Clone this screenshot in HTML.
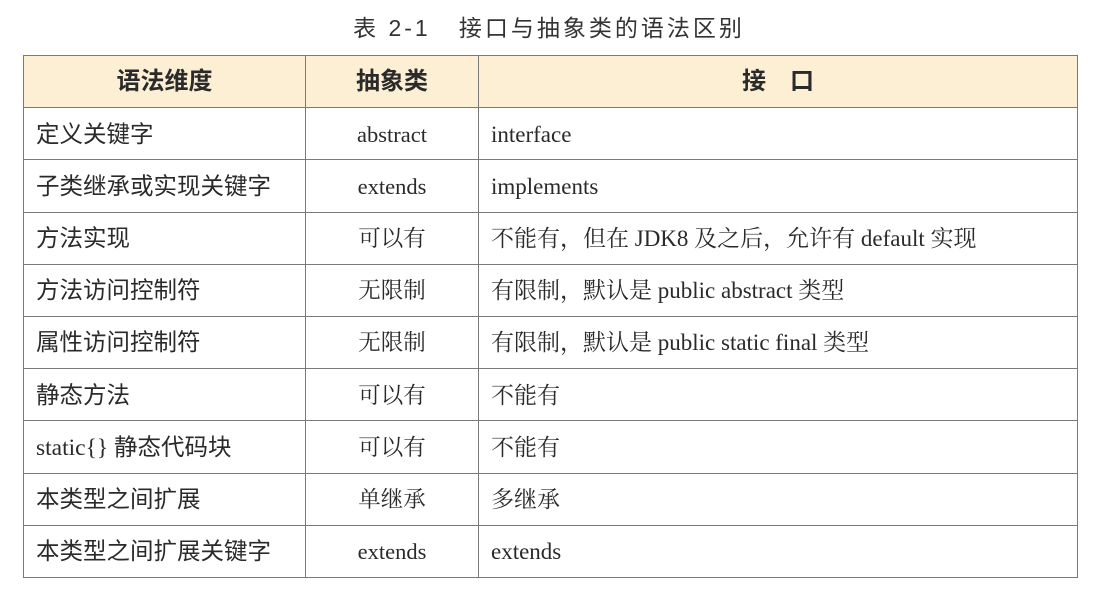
<!DOCTYPE html>
<html><head><meta charset="utf-8"><style>
body{margin:0;width:1098px;height:597px;background:#fff;position:relative;overflow:hidden;font-family:"Liberation Serif","Noto Serif CJK SC","Noto Sans CJK SC",serif;color:#2a2a2a}
.t{position:absolute;top:13px;left:0;width:1098px;text-align:center;font-size:23px;line-height:30px;font-family:"Liberation Sans","Noto Sans CJK SC",sans-serif;color:#333;letter-spacing:3px;white-space:pre}
table{position:absolute;left:23px;top:55px;border-collapse:collapse;width:1055px;table-layout:fixed}
td,th{border:1.5px solid #7a7a7a;height:52.2px;padding:0 12px;font-size:23px;line-height:26px;font-weight:normal;white-space:nowrap;vertical-align:middle;box-sizing:border-box}
td span{display:inline-block;vertical-align:middle;line-height:26px}
th{background:#fcefd4;font-family:"Liberation Sans","Noto Sans CJK SC",sans-serif;font-weight:bold;font-size:24px}
td:first-child{font-family:"Liberation Serif","Noto Sans CJK SC",sans-serif;font-size:23.5px}
td:nth-child(2){text-align:center;font-size:22.5px}
</style></head><body>
<div class="t">表 2-1   接口与抽象类的语法区别</div>
<table>
<colgroup><col style="width:282px"><col style="width:173px"><col></colgroup>
<tr><th>语法维度</th><th>抽象类</th><th>接　口</th></tr>
<tr><td><span>定义关键字</span></td><td><span>abstract</span></td><td><span>interface</span></td></tr>
<tr><td><span>子类继承或实现关键字</span></td><td><span>extends</span></td><td><span>implements</span></td></tr>
<tr><td><span>方法实现</span></td><td><span>可以有</span></td><td><span>不能有，但在 JDK8 及之后，允许有 default 实现</span></td></tr>
<tr><td><span>方法访问控制符</span></td><td><span>无限制</span></td><td><span>有限制，默认是 public abstract 类型</span></td></tr>
<tr><td><span>属性访问控制符</span></td><td><span>无限制</span></td><td><span>有限制，默认是 public static final 类型</span></td></tr>
<tr><td><span>静态方法</span></td><td><span>可以有</span></td><td><span>不能有</span></td></tr>
<tr><td><span>static{} 静态代码块</span></td><td><span>可以有</span></td><td><span>不能有</span></td></tr>
<tr><td><span>本类型之间扩展</span></td><td><span>单继承</span></td><td><span>多继承</span></td></tr>
<tr><td><span>本类型之间扩展关键字</span></td><td><span>extends</span></td><td><span>extends</span></td></tr>
</table>
</body></html>
